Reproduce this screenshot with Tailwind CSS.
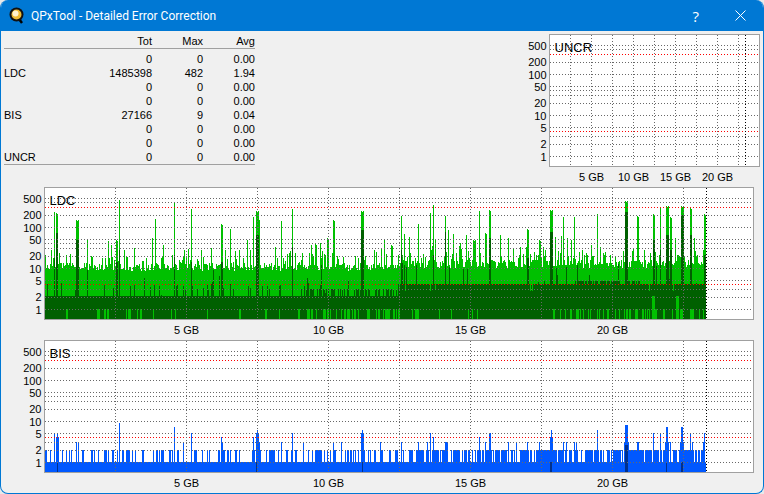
<!DOCTYPE html>
<html lang="en">
<head>
<meta charset="UTF-8">
<title>QPxTool - Detailed Error Correction</title>
<script src="https://cdn.jsdelivr.net/npm/@tailwindcss/browser@4"></script>
</head>
<body class="bg-[#e9e9e9] font-['Liberation_Sans',sans-serif] text-[11px] leading-[14px] text-black overflow-hidden">
<div class="w-[764px] h-[494px] flex flex-col rounded-lg overflow-hidden border border-[#0078d4] border-t-0 bg-[#f0f0f0]">

    <!-- title bar -->
    <div class="h-[31px] shrink-0 -mx-px bg-[#0078d4] flex items-center text-white">
        <svg class="ml-[9px] mr-[6px]" width="16" height="17" viewBox="0 0 16 17">
            <path d="M10 12l3 4" stroke="#000" stroke-width="2.5"/>
            <circle cx="7.5" cy="7.5" r="7" fill="#111"/>
            <circle cx="7.5" cy="7.5" r="5" fill="#eebb33"/>
            <circle cx="6.5" cy="6.5" r="3" fill="#fff3cf"/>
        </svg>
        <span class="font-['Roboto',sans-serif] text-[12px]">QPxTool - Detailed Error Correction</span>
        <span class="ml-auto font-['Open_Sans',sans-serif] text-[15px]">?</span>
        <svg class="ml-[36px] mr-[18px]" width="11" height="11" viewBox="0 0 11 11">
            <path d="M0.5 0.5l10 10M10.5 0.5l-10 10" stroke="#fff"/>
        </svg>
    </div>

    <!-- stats table + UNCR -->
    <div class="h-[152px] shrink-0 flex">
        <div class="ml-[3px] mt-[3px] w-[251px]">
            <div class="grid grid-cols-[70px_78px_51px_52px] h-[15px] border-b border-[#a0a0a0] text-right">
                <span></span><span>Tot</span><span>Max</span><span>Avg</span>
            </div>
            <div class="grid grid-cols-[70px_78px_51px_52px] auto-rows-[14px] pt-[3px] border-b border-[#a0a0a0] text-right">
                <span></span><span>0</span><span>0</span><span>0.00</span>
                <span class="text-left">LDC</span><span>1485398</span><span>482</span><span>1.94</span>
                <span></span><span>0</span><span>0</span><span>0.00</span>
                <span></span><span>0</span><span>0</span><span>0.00</span>
                <span class="text-left">BIS</span><span>27166</span><span>9</span><span>0.04</span>
                <span></span><span>0</span><span>0</span><span>0.00</span>
                <span></span><span>0</span><span>0</span><span>0.00</span>
                <span class="text-left">UNCR</span><span>0</span><span>0</span><span>0.00</span>
            </div>
        </div>
        <svg id="uncr" class="ml-auto block" width="243" height="152" viewBox="520 31 243 152"></svg>
    </div>

    <svg id="ldc" class="block shrink-0" width="762" height="153" viewBox="1 183 762 153"></svg>
    <svg id="bis" class="block shrink-0" width="762" height="157" viewBox="1 336 762 157"></svg>
</div>

<script>
    // small seeded generator so the noise is the same on every load
    function rng(seed) {
        return () => {
            seed = (seed + 0x6D2B79F5) | 0;
            let t = Math.imul(seed ^ (seed >>> 15), 1 | seed);
            t = (t + Math.imul(t ^ (t >>> 7), 61 | t)) ^ t;
            return ((t ^ (t >>> 14)) >>> 0) / 4294967296;
        };
    }

    const gridVals = [1, 2, 3, 5, 10, 20, 30, 40, 50, 100, 200, 400, 500];
    // label value and how far its baseline sits above the baseline of "1"
    const axisLabels = [[1, 0], [2, 13], [5, 29], [10, 41], [20, 54], [50, 70], [100, 82], [200, 95], [500, 111]];

    function drawChart(svg, o) {
        const yOf = v => Math.floor(o.base - 41 * Math.log10(v)) + 0.5;
        let s = `<rect x="${o.left}" y="${o.top}" width="${o.right - o.left}" height="${o.bottom - o.top}" fill="#fff"/>`;
        s += o.data || '';

        const dots = 'stroke-dasharray="1 2" shape-rendering="crispEdges"';
        gridVals.forEach(v => {
            s += `<path d="M${o.left} ${yOf(v)}H${o.right}" stroke="#686868" ${dots}/>`;
        });
        [4, 300].forEach(v => {
            s += `<path d="M${o.left} ${yOf(v)}H${o.right}" stroke="#ff0000" ${dots}/>`;
        });
        for (let i = 1; i <= 9; i++) {
            const x = o.left + i * o.step;
            s += `<path d="M${x} ${o.top}V${o.bottom}" stroke="#686868" ${dots}/>`;
        }
        s += `<path d="M${o.end} ${o.top}V${o.bottom}" stroke="#000" ${dots}/>`;
        s += `<rect x="${o.left}" y="${o.top}" width="${o.right - o.left}" height="${o.bottom - o.top}" fill="none" stroke="#a0a0a0"/>`;

        axisLabels.forEach(([v, up]) => {
            s += `<text x="${o.left - 3}" y="${o.base + 4.5 - up}" text-anchor="end">${v}</text>`;
        });
        [5, 10, 15, 20].forEach((gb, i) => {
            const x = o.left + (i + 1) * 2 * o.step;
            s += `<text x="${x}" y="${o.bottom + 14}" text-anchor="middle">${gb} GB</text>`;
        });
        s += `<text x="${o.left + 5}" y="${o.top + 17}" class="text-[13px]">${o.name}</text>`;
        svg.innerHTML = s;
    }

    const col = (x, top, bottom) => `M${x} ${top}h1V${bottom}h-1z`;

    // [x, top y, width, dark core top y]
    const ldcPeaks = [
        [54,212,1,258],[56,213,2,233],[76,220,3,240],[87,240,1,270],[92,257],[108,241],[111,245],[116,240,2,262],[119,200,1,250],
        [124,250],[127,257],[134,248],[146,258],[152,238],[155,219],[163,245],[172,255],[174,202,1,255],[188,249],[191,209,1,262],
        [211,248],[221,224,2,262],[230,229],[247,240],[250,250],[253,217],[256,211,3,235],[259,220],[275,247],[281,221],[289,253],
        [292,209,1,247],[295,253],[302,253],[311,245],[315,244,2],[320,243],[327,238,2],[333,220,2],[343,257],[358,258],[361,211,3,230],
        [381,248],[384,240],[391,245,2],[401,216,1,250],[404,234],[409,237],[415,258],[418,224],[430,213],[433,205,1,255],[435,240],
        [445,216,1,232],[448,230],[453,234],[460,243],[466,235],[473,240,3],[479,211],[485,233,2],[489,210,2,238],[500,235],[508,238],
        [513,248],[520,247],[527,229,2,258],[539,240,2],[550,210,3,232],[555,237],[561,236],[563,217],[567,238],[571,240],[574,217],
        [582,250],[587,255],[591,245],[597,214],[600,247],[625,201,3,212],[637,216,2],[644,250],[653,214,2,240],[660,207,1,250],
        [666,206,3,235],[670,217,2,250],[675,238],[681,206,3,215],[690,208,2,235],[694,238],[704,214,2,255]
    ];

    function ldcData() {
        const r = rng(7);
        const cols = {};
        for (let x = 45; x < 706; x++) {
            let top = 271 - 8 * r();
            if (x > 400) top -= 3;
            if (x > 694) top = 262 + 3 * r();
            if (r() < 0.22) top -= 4 + 12 * r();

            let dark = 296;
            if (x >= 306 && x < 398 && r() < 0.5) dark = 289;
            if (x >= 398) dark = r() < 0.06 ? 291 : 284;
            if (x >= 575 && x < 640 && r() < 0.7) dark = 281;
            if (x < 306 && r() < 0.18) dark = 289 - 6 * r();
            if (r() < 0.07) dark = Math.max(top + 2, dark - 25 * r());
            cols[x] = { top, dark };
        }
        ldcPeaks.forEach(([x, top, w = 1, core]) => {
            for (let i = x; i < x + w; i++) {
                if (!cols[i]) continue;
                cols[i].top = top + (i - x) % 2;
                if (core) cols[i].dark = core;
            }
        });

        let bright = '', dark = '', streak = false;
        for (let x = 45; x < 706; x++) {
            const c = cols[x];
            bright += col(x, Math.round(c.top), 319);
            dark += col(x, Math.round(c.dark), 319);
        }
        let cuts = '';
        for (let x = 45; x < 706; x++) {
            let p = 0.14;
            if (x < 65) p = 0;
            else if (x < 190) p = 0.11;
            else if (x < 305) p = 0.05;
            else if (x < 400) p = 0.25;
            else if (x < 570) p = 0.11;
            else if (x < 650) p = 0.35;
            else p = 0.18;
            streak = streak ? r() < 0.45 : r() < p;
            if (streak) cuts += col(x, 309, 319);
        }
        // bright columns that reach up through the dark band
        [652, 653, 654, 676, 677, 678].forEach(x => { cuts += col(x, 296, 319); });
        return `<path d="${bright}" fill="#00c000"/><path d="${dark}" fill="#006000"/><path d="${cuts}" fill="#00c000"/>`;
    }

    // [x, top y, width]
    const bisPeaks = [
        [54,433],[56,437,3],[57,433],[76,442],[78,442],[119,423],[174,427],[183,442],[191,433],[221,437],[222,442],
        [253,437],[256,433,3],[257,430],[259,442],[281,442],[292,433],[303,442],[333,442],[341,442],[361,433,3],[362,430],
        [380,442],[401,442],[418,442],[427,442],[430,433],[433,437],[445,442,3],[479,437],[485,442],[489,433,2],[508,442],
        [516,442],[527,442],[539,442],[550,437,3],[551,430],[563,442],[566,442],[574,442],[576,442],[597,430],[624,442,5],
        [625,425,3],[637,442,2],[653,433],[660,433],[665,442,4],[666,427,2],[670,442],[680,442,4],[681,427,2],[690,433],
        [692,442],[703,442,2],[704,433]
    ];

    function bisData() {
        const r = rng(23);
        let low = '', two = '', high = '';
        for (let x = 45; x < 706; x++) low += col(x, 462, 472);
        let on = false;
        for (let x = 45; x < 706; x++) {
            let p = 0.22;
            if (x >= 250) p = 0.28;
            if (x >= 410) p = 0.6;
            on = on ? r() < p + 0.2 : r() < p;
            if (on) two += col(x, 450, 462);
        }
        bisPeaks.forEach(([x, top, w = 1]) => {
            high += `M${x} ${top}h${w}V462h-${w}z`;
        });
        const navy = [[57,462,1],[256,462,1],[362,462,1],[550,462,2],[625,445,3],[666,462,1],[681,462,2]]
            .map(([x, top, w]) => `M${x} ${top}h${w}V472h-${w}z`).join('');
        return `<path d="${low}${two}${high}" fill="#0058ff"/><path d="${navy}" fill="#00308c"/>`;
    }

    drawChart(document.getElementById('uncr'), { name: 'UNCR', left: 549.5, right: 759.5, top: 34.5, bottom: 166.5, base: 156.5, step: 21, end: 745.5 });
    drawChart(document.getElementById('ldc'), { name: 'LDC', left: 44.5, right: 753.5, top: 187.5, bottom: 319.5, base: 309.5, step: 71, end: 706.5, data: ldcData() });
    drawChart(document.getElementById('bis'), { name: 'BIS', left: 44.5, right: 753.5, top: 340.5, bottom: 472.5, base: 462.5, step: 71, end: 706.5, data: bisData() });
</script>
</body>
</html>
